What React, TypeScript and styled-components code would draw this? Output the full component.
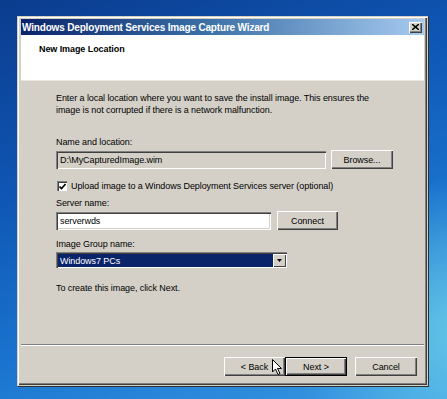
import React from "react";
import styled, { createGlobalStyle } from "styled-components";

const Global = createGlobalStyle`
  html, body { margin: 0; padding: 0; }
  body { width: 447px; height: 399px; overflow: hidden; font-family: "Liberation Sans", Arial, sans-serif; }
`;

const Desktop = styled.div`
  position: relative;
  width: 447px;
  height: 399px;
  box-sizing: border-box;
  padding: 16px 0 0 17px;
  overflow: hidden;
  background:
    radial-gradient(ellipse 260px 220px at 470px 330px, rgba(120, 220, 235, 0.75), rgba(120, 220, 235, 0) 70%),
    linear-gradient(160deg, #0b3c8e 0%, #0f56b4 35%, #1a74cf 65%, #3a9ae4 100%);
`;

const Win = styled.div`
  width: 411px;
  height: 370px;
  box-sizing: border-box;
  background: #d4d0c8;
  border: 1px solid #d4d0c8;
  box-shadow: inset 1px 1px 0 #ffffff, inset -1px -1px 0 #404040, inset -2px -2px 0 #808080, 1px 1px 0 #303030;
  padding: 2px 3px 3px 3px;
  display: flex;
  flex-direction: column;
  font-size: 9px;
  letter-spacing: -0.08px;
  color: #000;
`;

const TitleBar = styled.div`
  height: 16px;
  flex: none;
  display: flex;
  align-items: center;
  justify-content: space-between;
  padding: 0 2px 0 1px;
  background: linear-gradient(90deg, #0a246a 0%, #3a6ea5 45%, #a6caf0 100%);
`;

const TitleText = styled.span`
  color: #fff;
  font-weight: bold;
  font-size: 10px;
  letter-spacing: -0.17px;
`;

const CloseBtn = styled.div`
  width: 13px;
  height: 11px;
  box-sizing: border-box;
  background: #d4d0c8;
  box-shadow: inset 1px 1px 0 #fff, inset -1px -1px 0 #404040, inset -2px -2px 0 #808080;
  display: flex;
  align-items: center;
  justify-content: center;
`;

const Header = styled.div`
  height: 46px;
  flex: none;
  background: #fff;
  border-bottom: 1px solid #e8e6e0;
  padding: 9px 0 0 18px;
  box-sizing: border-box;
`;

const HeaderTitle = styled.div`
  font-weight: bold;
  font-size: 9px;
`;

const Body = styled.div`
  flex: 1;
  padding: 11px 0 0 35px;
  display: flex;
  flex-direction: column;
`;

const Para = styled.div`
  line-height: 12px;
  width: 330px;
`;

const Label = styled.div<{ $top: number }>`
  margin-top: ${(p) => p.$top}px;
  line-height: 12px;
`;

const Row = styled.div`
  display: flex;
  align-items: center;
  margin-top: 2px;
`;

const TextBox = styled.div<{ $w: number; $disabled?: boolean }>`
  width: ${(p) => p.$w}px;
  height: 18px;
  box-sizing: border-box;
  background: ${(p) => (p.$disabled ? "#d4d0c8" : "#fff")};
  box-shadow: inset 1px 1px 0 #808080, inset 2px 2px 0 #404040, inset -1px -1px 0 #fff, inset -2px -2px 0 #d4d0c8;
  padding: 0 4px;
  display: flex;
  align-items: center;
`;

const Button = styled.div<{ $w: number; $default?: boolean }>`
  width: ${(p) => p.$w}px;
  height: 19px;
  box-sizing: border-box;
  background: #d4d0c8;
  border: ${(p) => (p.$default ? "1px solid #000" : "none")};
  box-shadow: inset 1px 1px 0 #fff, inset -1px -1px 0 #404040, inset -2px -2px 0 #808080;
  display: flex;
  align-items: center;
  justify-content: center;
`;

const CheckRow = styled.div`
  display: flex;
  align-items: center;
  margin-top: 12px;
  margin-left: 1px;
  gap: 4px;
`;

const CheckBox = styled.div`
  width: 10px;
  height: 10px;
  box-sizing: border-box;
  background: #fff;
  box-shadow: inset 1px 1px 0 #808080, inset 2px 2px 0 #404040, inset -1px -1px 0 #fff;
  display: flex;
  align-items: center;
  justify-content: center;
`;

const Select = styled.div`
  width: 231px;
  height: 16px;
  box-sizing: border-box;
  background: #fff;
  box-shadow: inset 1px 1px 0 #808080, inset 2px 2px 0 #404040, inset -1px -1px 0 #fff;
  padding: 2px 1px 1px 2px;
  display: flex;
`;

const SelectValue = styled.div`
  flex: 1;
  background: #0a246a;
  color: #fff;
  display: flex;
  align-items: center;
  padding-left: 2px;
`;

const DropBtn = styled.div`
  width: 13px;
  box-sizing: border-box;
  background: #d4d0c8;
  box-shadow: inset 1px 1px 0 #fff, inset -1px -1px 0 #404040;
  display: flex;
  align-items: center;
  justify-content: center;
`;

const Separator = styled.div`
  height: 0;
  border-top: 1px solid #808080;
  border-bottom: 1px solid #fff;
  flex: none;
`;

const Footer = styled.div`
  height: 36px;
  flex: none;
  display: flex;
  justify-content: flex-end;
  align-items: flex-start;
  padding: 11px 7px 0 0;
  box-sizing: border-box;
`;

const Gap = styled.div<{ $w: number }>`
  width: ${(p) => p.$w}px;
`;

const Cursor = styled.svg`
  position: absolute;
  left: 272px;
  top: 359px;
`;

export default function App() {
  return (
    <>
      <Global />
      <Desktop>
        <Win>
          <TitleBar>
            <TitleText>Windows Deployment Services Image Capture Wizard</TitleText>
            <CloseBtn>
              <svg width="7" height="6" viewBox="0 0 7 6">
                <path d="M0 0 L7 6 M7 0 L0 6" stroke="#000" strokeWidth="1.5" />
              </svg>
            </CloseBtn>
          </TitleBar>
          <Header>
            <HeaderTitle>New Image Location</HeaderTitle>
          </Header>
          <Body>
            <Para>
              Enter a local location where you want to save the install image. This ensures the image is not
              corrupted if there is a network malfunction.
            </Para>
            <Label $top={20}>Name and location:</Label>
            <Row>
              <TextBox $w={270} $disabled>D:\MyCapturedImage.wim</TextBox>
              <Gap $w={5} />
              <Button $w={62}>Browse...</Button>
            </Row>
            <CheckRow>
              <CheckBox>
                <svg width="7" height="7" viewBox="0 0 7 7">
                  <path d="M0.5 3.5 L2.5 5.5 L6.5 1" stroke="#000" strokeWidth="1.6" fill="none" />
                </svg>
              </CheckBox>
              <span>Upload image to a Windows Deployment Services server (optional)</span>
            </CheckRow>
            <Label $top={6}>Server name:</Label>
            <Row>
              <TextBox $w={215}>serverwds</TextBox>
              <Gap $w={6} />
              <Button $w={61}>Connect</Button>
            </Row>
            <Label $top={8}>Image Group name:</Label>
            <Row>
              <Select>
                <SelectValue>Windows7 PCs</SelectValue>
                <DropBtn>
                  <svg width="5" height="3" viewBox="0 0 5 3">
                    <path d="M0 0 H5 L2.5 3 Z" fill="#000" />
                  </svg>
                </DropBtn>
              </Select>
            </Row>
            <Label $top={14}>To create this image, click Next.</Label>
          </Body>
          <Separator />
          <Footer>
            <Button $w={61}>&lt; Back</Button>
            <Button $w={62} $default>Next &gt;</Button>
            <Gap $w={8} />
            <Button $w={62}>Cancel</Button>
          </Footer>
        </Win>
        <Cursor width="11" height="17" viewBox="0 0 11 17">
          <path d="M0.5 0.5 L0.5 13 L3.5 10 L6 15.5 L8 14.5 L5.5 9.5 L9.5 9.5 Z" fill="#fff" stroke="#000" strokeWidth="1" />
        </Cursor>
      </Desktop>
    </>
  );
}
